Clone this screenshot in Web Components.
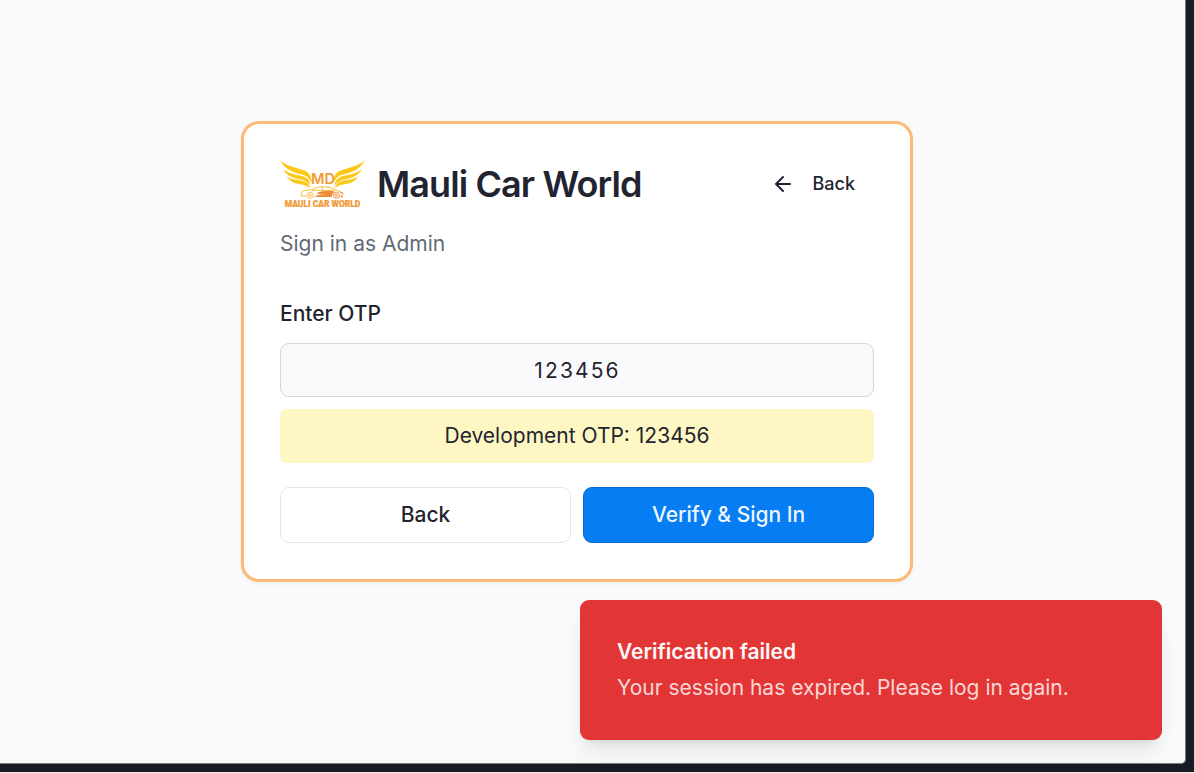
<!DOCTYPE html>
<html lang="en"><head><meta charset="utf-8"><title>Mauli Car World</title>
<style>html,body{margin:0;height:773px;overflow:hidden;background:#181a24}body{box-sizing:border-box;border-bottom:1px solid #f7eeee;font-family:Inter,"Liberation Sans",sans-serif;color:#1f2430}</style></head>
<body><app-shell></app-shell>
<script>
const define=(name,html)=>customElements.define(name,class extends HTMLElement{constructor(){super();this.attachShadow({mode:'open'}).innerHTML=html}});
define('brand-logo',`<style>:host{display:block;width:85px;height:49px}svg{display:block;overflow:visible}</style>
<svg width="85" height="49" viewBox="24 24 255 147">
<defs><g id="wing" fill="#fcc816"><path d="M24 24C42 43 78 48 101 57C113 63 118 76 119 93C111 78 104 71 87 67C59 61 34 48 24 24Z"/><path d="M33 50C49 67 84 68 98 75C109 80 114 88 115 101C104 87 94 84 79 81C57 76 41 68 33 50Z"/><path d="M44 72C59 85 84 83 95 88C106 92 112 97 114 108C101 99 92 98 80 96C62 93 51 85 44 72Z"/></g></defs>
<use href="#wing"/><use href="#wing" transform="translate(303 0) scale(-1 1)"/>
<text x="117" y="97" textLength="72" lengthAdjust="spacingAndGlyphs" font-family="Inter" font-weight="600" font-size="43" fill="#f39a32">MD</text>
<g fill="none" stroke="#f8bd3c" stroke-width="3"><path d="M104 132H89Q84 119 96 116L119 113Q134 103 158 104Q178 105 192 114L207 120"/><path d="M119 115H188M151 105V115"/><circle cx="115" cy="130" r="9"/><circle cx="115" cy="130" r="3"/><circle cx="193" cy="130" r="9" stroke="#f08a35"/><circle cx="193" cy="130" r="3" stroke="#f08a35"/></g><path d="M127 135C139 126 150 130 158 126C148 128 139 126 133 123C151 117 172 114 188 119Q178 125 180 135Z" fill="#f08a35"/><path d="M204 122h8v5l-6 8h7" fill="none" stroke="#f08a35" stroke-width="3"/>
<text x="38" y="166" textLength="227" lengthAdjust="spacingAndGlyphs" font-family="Roboto" font-weight="900" font-size="26" fill="#f29a38" stroke="#f29a38" stroke-width=".7">MAULI CAR WORLD</text></svg>`);
define('back-link',`<style>:host{display:flex;align-items:center;gap:18px;font-size:18px;font-weight:500;line-height:27px}svg{display:block}</style><svg width="24" height="24" viewBox="0 0 24 24" fill="none" stroke="#1f2430" stroke-width="2" stroke-linecap="round" stroke-linejoin="round"><path d="M12 19l-7-7 7-7M5 12h14"/></svg><span><slot></slot></span>`);
define('card-header',`<style>:host{display:block}.row{display:flex;align-items:center;height:49px}h1{margin:0 0 2px 12px;font-size:36px;font-weight:600;letter-spacing:-.9px;line-height:48px;white-space:nowrap}back-link{margin-left:auto;margin-right:19px;margin-bottom:2px}p{margin:19px 0 0;font-size:21px;line-height:32px;color:#626976}</style><div class="row"><brand-logo></brand-logo><h1>Mauli Car World</h1><back-link>Back</back-link></div><p>Sign in as Admin</p>`);
define('otp-field',`<style>:host{display:block;margin-top:43px;font-size:21px}label{display:block;font-weight:500;line-height:22px}input{display:block;box-sizing:border-box;width:100%;height:54px;margin:18px 0 12px;border:1px solid #d3d6da;border-radius:9px;background:#f9fafc;font:inherit;color:inherit;text-align:center;letter-spacing:2.1px;padding:0 17px 0 18px;outline:0}.hint{height:54px;line-height:54px;border-radius:6px;background:#fef7c3;text-align:center}</style><label for="otp">Enter OTP</label><input id="otp" value="123456"><div class="hint">Development OTP: 123456</div>`);
define('form-button',`<style>:host{display:block;flex:1}button{box-sizing:border-box;display:block;width:100%;height:56px;border:1px solid #e5e6e8;border-radius:9px;background:#fff;color:inherit;font:500 21px Inter,sans-serif;padding:0 0 2px}:host([primary]) button{background:#067df2;border-color:#056bd0;color:#eff7ff}</style><button><slot></slot></button>`);
define('login-card',`<style>:host{display:block;box-sizing:border-box;width:672px;height:461px;border:3px solid #fdba74;border-radius:18px;background:#fff;padding:36px;box-shadow:0 1.5px 4px #0000000d}.actions{display:flex;gap:12px;margin-top:24px}</style><card-header></card-header><otp-field></otp-field><div class="actions"><form-button>Back</form-button><form-button primary>Verify &amp; Sign In</form-button></div>`);
define('toast-message',`<style>:host{display:flex;flex-direction:column;justify-content:center;gap:4px;box-sizing:border-box;width:582px;height:140px;padding:0 37px;border-radius:9px;background:#e23636;font-size:21px;line-height:32px;box-shadow:0 15px 22px -5px #0000001a,0 6px 9px -6px #0000001a}b{font-weight:600;color:#fff8f8}span{color:#fad7d7}</style><b><slot name="title"></slot></b><span><slot></slot></span>`);
define('app-shell',`<style>:host{display:block;position:relative;box-sizing:border-box;width:1186px;height:764px;padding:121px 0 0 241px;overflow:hidden;background:#f9fafc;border:solid #777b83;border-width:0 1px 1px 0;border-radius:0 0 5px 0}toast-message{position:absolute;right:23px;bottom:23px}</style><login-card></login-card><toast-message><span slot="title">Verification failed</span>Your session has expired. Please log in again.</toast-message>`);
</script></body></html>
